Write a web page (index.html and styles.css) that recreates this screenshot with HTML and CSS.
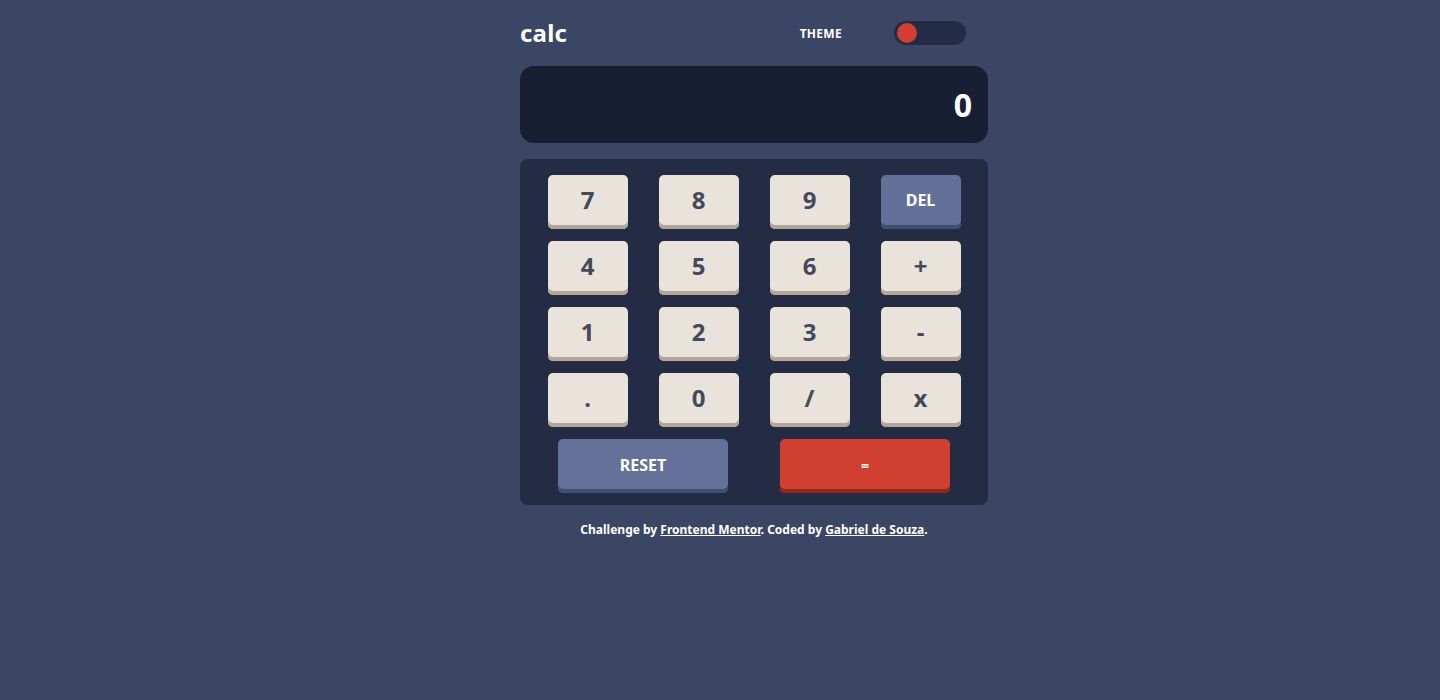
FILE: index.html
```html
<!DOCTYPE html>
<html lang="en">
<head>
<meta charset="utf-8">
<title>Calculator</title>
<link rel="stylesheet" href="styles.css">
</head>
<body>
<main class="calc">
  <header class="header">
    <h1 class="logo">calc</h1>
    <div class="theme">
      <span class="theme-label">THEME</span>
      <div class="toggle"><span class="knob"></span></div>
    </div>
  </header>
  <section class="screen">0</section>
  <section class="keypad">
    <div class="keys">
      <button class="key">7</button>
      <button class="key">8</button>
      <button class="key">9</button>
      <button class="key key-del">DEL</button>
      <button class="key">4</button>
      <button class="key">5</button>
      <button class="key">6</button>
      <button class="key key-op">+</button>
      <button class="key">1</button>
      <button class="key">2</button>
      <button class="key">3</button>
      <button class="key key-op">-</button>
      <button class="key">.</button>
      <button class="key">0</button>
      <button class="key">/</button>
      <button class="key key-op">x</button>
    </div>
    <div class="bottom">
      <button class="key key-wide key-reset">RESET</button>
      <button class="key key-wide key-eq">=</button>
    </div>
  </section>
  <footer class="footer">Challenge by <a href="#">Frontend Mentor</a>. Coded by <a href="#">Gabriel de Souza</a>.</footer>
</main>
</body>
</html>
```
FILE: styles.css
```css
* { box-sizing: border-box; }
html, body { margin: 0; padding: 0; }
body {
  background: #3a4663;
  font-family: "Noto Sans", "Open Sans", sans-serif;
  color: #fff;
  height: 700px;
}
.calc {
  width: 468px;
  margin-left: calc(50% - 200px);
  padding-top: 17px;
}
.header {
  display: flex;
  align-items: center;
  justify-content: space-between;
  height: 32px;
}
.logo {
  margin: 0;
  font-size: 24px;
  font-weight: 700;
  line-height: 32px;
  letter-spacing: 0.2px;
}
.theme {
  display: flex;
  align-items: center;
  gap: 52px;
  margin-right: 22px;
}
.theme-label {
  font-size: 12px;
  font-weight: 700;
  letter-spacing: 0.3px;
}
.toggle {
  width: 72px;
  height: 24px;
  border-radius: 12px;
  background: #232c44;
  display: flex;
  align-items: center;
  padding-left: 3px;
}
.knob {
  width: 20px;
  height: 20px;
  border-radius: 50%;
  background: #d03f2f;
}
.screen {
  margin-top: 17px;
  height: 77px;
  background: #181f33;
  border-radius: 14px;
  display: flex;
  align-items: center;
  justify-content: flex-end;
  padding-right: 16px;
  font-size: 32px;
  font-weight: 700;
}
.keypad {
  margin-top: 16px;
  background: #232c44;
  border-radius: 8px;
  padding: 16px 0 12px;
}
.keys {
  display: grid;
  grid-template-columns: repeat(4, 80px);
  column-gap: 31px;
  row-gap: 12px;
  justify-content: center;
}
.key {
  height: 54px;
  border: 0;
  border-radius: 5px;
  background: #eae3dc;
  box-shadow: inset 0 -4px 0 #b4a597;
  color: #434a59;
  font-family: inherit;
  font-size: 24px;
  font-weight: 700;
  padding: 0 0 6px;
  cursor: pointer;
}
.key-del {
  background: #637097;
  box-shadow: inset 0 -4px 0 #404e72;
  color: #fff;
  font-size: 16px;
  padding-bottom: 4px;
}
.bottom {
  display: flex;
  justify-content: center;
  gap: 52px;
  margin-top: 12px;
}
.key-wide {
  width: 170px;
  font-size: 16px;
  color: #fff;
  padding-bottom: 2px;
}
.key-reset {
  background: #647198;
  box-shadow: inset 0 -4px 0 #404e72;
}
.key-eq {
  background: #d03f2f;
  box-shadow: inset 0 -4px 0 #93261a;
  font-size: 14px;
}
.footer {
  margin-top: 16px;
  text-align: center;
  font-size: 12px;
  font-weight: 700;
}
.footer a { color: #fff; }
```
